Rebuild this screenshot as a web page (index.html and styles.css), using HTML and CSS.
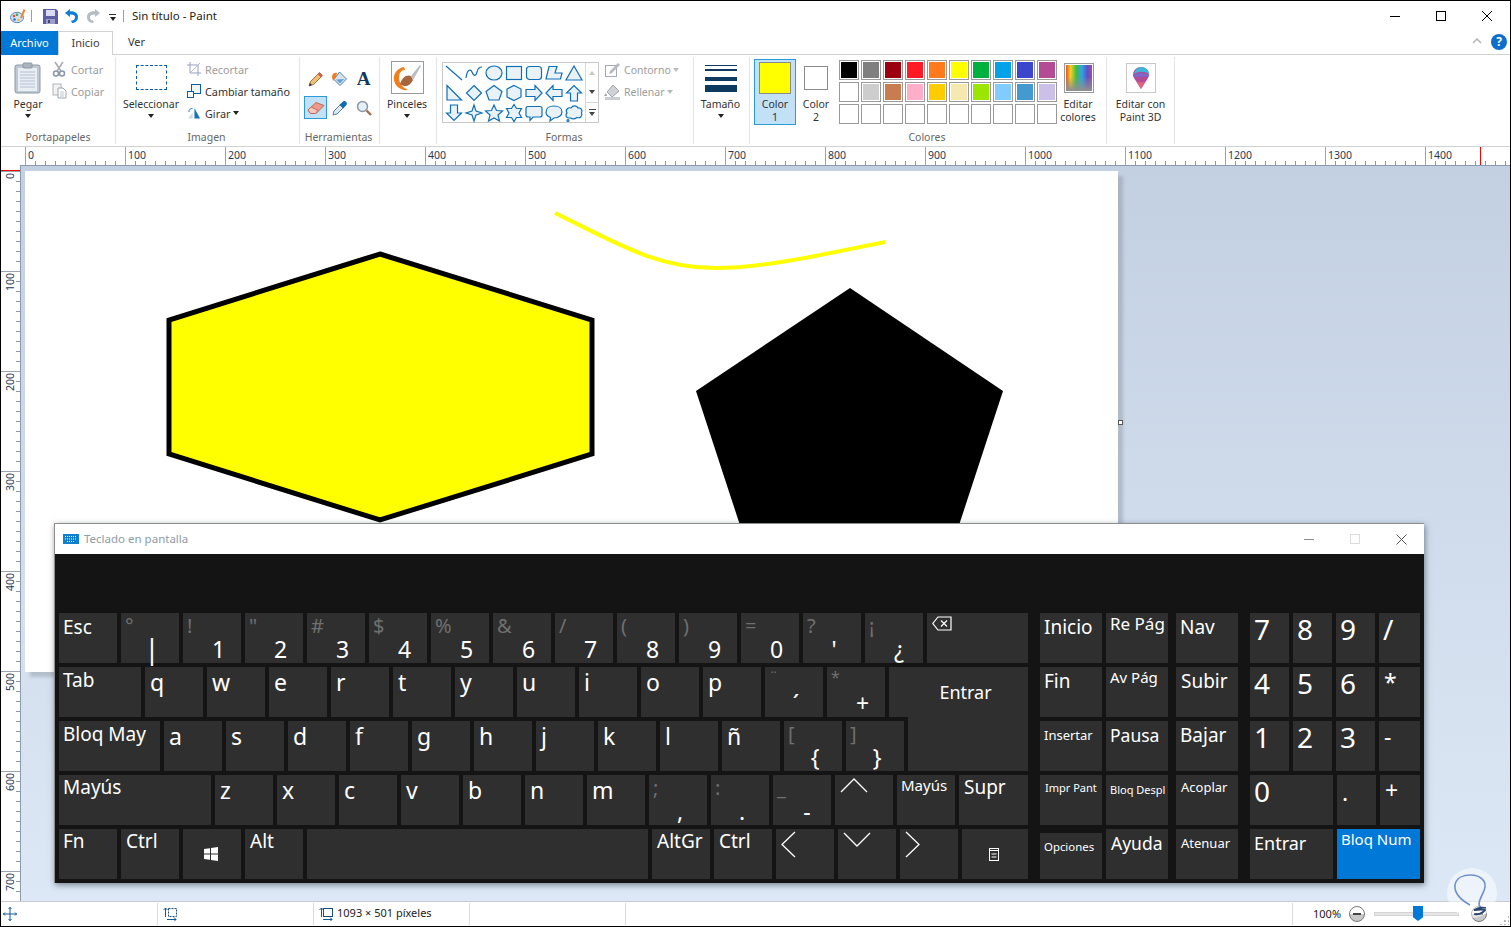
FILE: index.html
```html
<!DOCTYPE html>
<html lang="es">
<head>
<meta charset="utf-8">
<title>Sin título - Paint</title>
<link rel="stylesheet" href="styles.css">
</head>
<body>
<div class="app">
  <header class="titlebar">
    <svg class="ico-app" width="16" height="16" viewBox="0 0 16 16"><ellipse cx="7" cy="9.5" rx="6.5" ry="5.2" fill="#cfe3f4" stroke="#5b87b5"/><circle cx="4" cy="8" r="1.3" fill="#e2503d"/><circle cx="7" cy="6.7" r="1.3" fill="#3aa655"/><circle cx="4.5" cy="11.5" r="1.3" fill="#2f6fc0"/><circle cx="8.5" cy="12" r="1.2" fill="#e8b52e"/><path d="M11 10L14.5 1.5" stroke="#e98a2c" stroke-width="2"/></svg>
    <i class="tb-sep"></i>
    <svg class="ico-save" width="15" height="15" viewBox="0 0 15 15"><path d="M0 0H13L15 2V15H0Z" fill="#5d5ea6"/><rect x="3" y="1" width="9" height="6" fill="#d9dcf0"/><rect x="3" y="10" width="9" height="5" fill="#9ea0c8"/><rect x="5" y="11" width="2" height="3" fill="#44457f"/></svg>
    <svg class="ico-undo" width="15" height="16" viewBox="0 0 15 16"><path d="M1 5L6 1V3.4C11 3 14 5.4 14 9C14 12.5 11.6 15 8 15L7 12.7C9.8 12.7 11 11.2 11 9C11 7.2 9.200 6.300 6 6.500V9Z" fill="#0e7fd6"/></svg>
    <svg class="ico-redo" width="15" height="16" viewBox="0 0 15 16"><path d="M14 5L9 1V3.400C4 3 1 5.400 1 9C1 12.500 3.400 15 7 15L8 12.700C5.200 12.700 4 11.200 4 9C4 7.200 5.800 6.300 9 6.500V9Z" fill="#b4bcc4"/></svg>
    <span class="tb-drop"><i class="tb-drop-line"></i><i class="caret"></i></span>
    <i class="tb-sep tb-sep2"></i>
    <span class="tb-title">Sin título - Paint</span>
    <div class="winctl">
      <svg width="12" height="12" viewBox="0 0 12 12"><path d="M1 6.500H11" stroke="#000"/></svg>
      <svg width="12" height="12" viewBox="0 0 12 12"><rect x="1.500" y="1.500" width="9" height="9" fill="none" stroke="#000"/></svg>
      <svg width="12" height="12" viewBox="0 0 12 12"><path d="M1 1L11 11M11 1L1 11" stroke="#000"/></svg>
    </div>
  </header>

  <nav class="tabs">
    <span class="tab tab-file">Archivo</span>
    <span class="tab tab-on">Inicio</span>
    <span class="tab tab-ver">Ver</span>
    <svg class="tabs-up" width="10" height="6" viewBox="0 0 10 6"><path d="M1 5L5 1L9 5" fill="none" stroke="#b5b5b5" stroke-width="1.500"/></svg>
    <span class="help">?</span>
  </nav>

  <section class="ribbon">
    <div class="group g-clip">
      <div class="group-body">
        <div class="big b-paste">
          <div class="big-ico"><svg width="28" height="32" viewBox="0 0 28 32"><rect x="1" y="3" width="25" height="28" rx="2" fill="#bfc8d3" stroke="#8e99a6"/><rect x="4" y="6" width="19" height="23" fill="#e9eef5"/><path d="M6 10H21M6 13H21M6 16H21M6 19H21M6 22H21M6 25H21" stroke="#b4c1d2"/><rect x="9" y="1" width="9" height="5" rx="1" fill="#aab3be" stroke="#8e99a6"/></svg></div>
          <span class="big-label">Pegar</span><i class="caret"></i>
        </div>
        <div class="smalls s-clip">
          <div class="small off"><svg width="15" height="16" viewBox="0 0 15 16"><path d="M3 1L9 10M11 1L5 10" stroke="#a5a9b0" stroke-width="1.500"/><circle cx="4" cy="12.500" r="2.500" fill="none" stroke="#8b94a8" stroke-width="1.500"/><circle cx="10" cy="12.500" r="2.500" fill="none" stroke="#8b94a8" stroke-width="1.500"/></svg>Cortar</div>
          <div class="small off"><svg width="15" height="16" viewBox="0 0 15 16"><rect x="1" y="1" width="8" height="11" fill="#f3f3f3" stroke="#aeb4bb"/><path d="M6 5H11L14 8V15H6Z" fill="#fff" stroke="#9ea5ad"/><path d="M8 9H12M8 11H12M8 13H12" stroke="#c0c5cb"/></svg>Copiar</div>
        </div>
      </div>
      <div class="group-label">Portapapeles</div>
    </div>

    <div class="group g-image">
      <div class="group-body">
        <div class="big b-select">
          <div class="big-ico"><i class="dashed"></i></div>
          <span class="big-label">Seleccionar</span><i class="caret"></i>
        </div>
        <div class="smalls s-image">
          <div class="small off"><svg width="14" height="14" viewBox="0 0 14 14"><path d="M3 0V11H14M0 3H11V14" fill="none" stroke="#9a9fc0"/><path d="M3 11L13 1" stroke="#b5b8d0"/></svg>Recortar</div>
          <div class="small"><svg width="14" height="14" viewBox="0 0 14 14"><rect x="4.500" y="0.500" width="9" height="9" fill="#eef5fb" stroke="#0e5f9e"/><rect x="0.500" y="7.500" width="6" height="6" fill="#fff" stroke="#0e5f9e"/></svg>Cambiar tamaño</div>
          <div class="small"><svg width="14" height="14" viewBox="0 0 15 14"><path d="M8 13V2L14 13Z" fill="#1273b8"/><path d="M6 13L1 13L6 7Z" fill="#cfd8e0"/><path d="M2 6C2 3 4 2 6 2" fill="none" stroke="#1273b8"/></svg>Girar<i class="caret caret-in"></i></div>
        </div>
      </div>
      <div class="group-label">Imagen</div>
    </div>

    <div class="group g-tools">
      <div class="group-body">
        <div class="tools">
          <span class="tool"><svg width="16" height="16" viewBox="0 0 16 16"><path d="M1 15L2.500 10.500L11.500 1.500L14.500 4.500L5.500 13.500Z" fill="#f0c070" stroke="#a8703a"/><path d="M1 15L2 12L4 14Z" fill="#333"/><path d="M10.500 2.500L13.500 5.500" stroke="#d9534f" stroke-width="2"/></svg></span>
          <span class="tool"><svg width="17" height="17" viewBox="0 0 17 17"><path d="M8.500 2L15.500 9L9 15.500L3 9.500Z" fill="#d4e4f4" stroke="#4f81b0"/><path d="M5 9.500L9 13.500L13 9Z" fill="#68a0d4"/><path d="M1 7C1 4 3 2 6 3L5 7L2 11Z" fill="#f27d1f"/></svg></span>
          <span class="tool tool-a">A</span>
          <span class="tool tool-on"><svg width="18" height="14" viewBox="0 0 18 14"><path d="M1 9L9 1.500L17 4.500L9 12.500L3.500 12.500Z" fill="#f0988a" stroke="#b96d5f"/><path d="M1 9L4 5.800L11 9.500L8.500 12.500H3.500Z" fill="#f6c6b8" stroke="#b96d5f"/></svg></span>
          <span class="tool"><svg width="16" height="16" viewBox="0 0 16 16"><path d="M1 15L2 11L8 5L11 8L5 14Z" fill="#dbe9f4" stroke="#5d7f9b"/><path d="M7.500 4.500L11.500 8.500L12.500 7L14.500 5C16 3 13 0 11 1.500L9 3.500Z" fill="#0e6db3"/></svg></span>
          <span class="tool"><svg width="16" height="16" viewBox="0 0 16 16"><circle cx="6.500" cy="6.500" r="5" fill="#e3eff9" stroke="#8b97a5" stroke-width="1.500"/><path d="M10.500 10.500L15 15" stroke="#a07050" stroke-width="2.400"/></svg></span>
        </div>
      </div>
      <div class="group-label">Herramientas</div>
    </div>

    <div class="group g-brush">
      <div class="group-body">
        <div class="big b-full b-left">
          <div class="big-ico"><span class="brush"><svg width="30" height="30" viewBox="0 0 30 30"><path d="M12 4C6 5 1 10 2 17C3 24 10 28 16 27C11 25 7 20 7 15C7 10 9 7 13 7Z" fill="#f07f1c"/><path d="M8 21C10 14 15 11 19 13L21 17C18 23 13 25 8 21Z" fill="#a8643c"/><path d="M19 13L28 2L29 3L21 17Z" fill="#b9bec4"/></svg></span></div>
          <span class="big-label">Pinceles</span><i class="caret"></i>
        </div>
      </div>
      <div class="group-label">&nbsp;</div>
    </div>

    <div class="group g-shapes">
      <div class="group-body">
        <div class="gallery">
          <div class="gal-grid">
            <svg class="sh" viewBox="0 0 20 20"><path d="M2 3L18 17"/></svg>
            <svg class="sh" viewBox="0 0 20 20"><path class="nf" d="M2 15C3 7 6 5 8 9C10 14 12 13 13 9C14 5 16 4 18 4"/></svg>
            <svg class="sh" viewBox="0 0 20 20"><ellipse cx="10" cy="10" rx="8" ry="7"/></svg>
            <svg class="sh" viewBox="0 0 20 20"><rect x="2.500" y="3.500" width="15" height="13"/></svg>
            <svg class="sh" viewBox="0 0 20 20"><rect x="2.500" y="3.500" width="15" height="13" rx="3"/></svg>
            <svg class="sh" viewBox="0 0 20 20"><path d="M2 16L5 3.500H13L11 10H18L16.500 16Z"/></svg>
            <svg class="sh" viewBox="0 0 20 20"><path d="M10 3L18 17H2Z"/></svg>
            <svg class="sh" viewBox="0 0 20 20"><path d="M3 2.500L17.500 17H3Z"/></svg>
            <svg class="sh" viewBox="0 0 20 20"><path d="M10 2.500L17.500 10L10 17.500L2.500 10Z"/></svg>
            <svg class="sh" viewBox="0 0 20 20"><path d="M10 2.500L18 8.500L15 17H5L2 8.500Z"/></svg>
            <svg class="sh" viewBox="0 0 20 20"><path d="M10 2.500L17 6V14L10 17.500L3 14V6Z"/></svg>
            <svg class="sh" viewBox="0 0 20 20"><path d="M2 6.500H11V2.500L18 10L11 17.500V13.500H2Z"/></svg>
            <svg class="sh" viewBox="0 0 20 20"><path d="M18 6.500H9V2.500L2 10L9 17.500V13.500H18Z"/></svg>
            <svg class="sh" viewBox="0 0 20 20"><path d="M6.500 18V10H2.500L10 2.500L17.500 10H13.500V18Z"/></svg>
            <svg class="sh" viewBox="0 0 20 20"><path d="M6.500 2V10H2.500L10 17.500L17.500 10H13.500V2Z"/></svg>
            <svg class="sh" viewBox="0 0 20 20"><path d="M10 2L12 8L18 10L12 12L10 18L8 12L2 10L8 8Z"/></svg>
            <svg class="sh" viewBox="0 0 20 20"><path d="M10 2L12.500 7.500L18.500 8L14 12L15.500 18L10 15L4.500 18L6 12L1.500 8L7.500 7.500Z"/></svg>
            <svg class="sh" viewBox="0 0 20 20"><path d="M10 1.500L12.500 5.500H17.500L15 10L17.500 14.500H12.500L10 18.500L7.500 14.500H2.500L5 10L2.500 5.500H7.500Z"/></svg>
            <svg class="sh" viewBox="0 0 20 20"><path d="M4 3.500H16C17.500 3.500 18 4.500 18 5.500V12C18 13 17.500 14 16 14H9L6 17.500V14H4C2.500 14 2 13 2 12V5.500C2 4.500 2.500 3.500 4 3.500Z"/></svg>
            <svg class="sh" viewBox="0 0 20 20"><path d="M10 3C15 3 18 5.500 18 9C18 12.500 14.500 15 10 15L6 18L6.500 14.500C3.500 13.500 2 11.500 2 9C2 5.500 5 3 10 3Z"/></svg>
            <svg class="sh" viewBox="0 0 20 20"><path d="M5 15C2 15 1 12 3 10C1 7 4 4 7 5C9 2 13 2.500 14 5C17 4.500 19 7.500 17.500 10C19 13 16 15.500 13 14.500C11 16 8 16 6.500 15Z"/><circle cx="4" cy="17.500" r="1"/></svg>
          </div>
          <div class="gal-scroll">
            <span class="gs"><i class="tri-up"></i></span>
            <span class="gs"><i class="tri-dn"></i></span>
            <span class="gs gs-more"><i class="gs-line"></i><i class="tri-dn"></i></span>
          </div>
        </div>
        <div class="smalls s-shape">
          <div class="small off"><svg width="17" height="16" viewBox="0 0 17 16"><rect x="1.500" y="3.500" width="11" height="11" fill="#fff" stroke="#a3a7c8"/><path d="M5 12L6 9L14 1L16 3L8 11Z" fill="#b8bac0"/></svg>Contorno<i class="caret caret-in caret-off"></i></div>
          <div class="small off"><svg width="17" height="16" viewBox="0 0 17 16"><path d="M9 1L15 7L8 13L3 8Z" fill="#cfd3d8" stroke="#a0a6ad"/><path d="M2 9L0 12L3 12Z" fill="#9aa0a8"/><rect x="1" y="13" width="15" height="3" fill="#c9cdd3"/></svg>Rellenar<i class="caret caret-in caret-off"></i></div>
        </div>
      </div>
      <div class="group-label">Formas</div>
    </div>

    <div class="group g-size">
      <div class="group-body">
        <div class="big b-full b-left">
          <div class="big-ico"><span class="lines"><i class="l1"></i><i class="l2"></i><i class="l3"></i><i class="l4"></i></span></div>
          <span class="big-label">Tamaño</span><i class="caret"></i>
        </div>
      </div>
      <div class="group-label">&nbsp;</div>
    </div>

    <div class="group g-colors">
      <div class="group-body">
        <div class="color-btn color-on">
          <div class="c1-ico"><i class="c-swatch c-yellow"></i></div>
          <span class="big-label">Color<br>1</span>
        </div>
        <div class="color-btn">
          <div class="big-ico"><i class="c-swatch c-white"></i></div>
          <span class="big-label">Color<br>2</span>
        </div>
        <div class="swatches">
          <i class="sw"><b style="background:#000"></b></i><i class="sw"><b style="background:#7f7f7f"></b></i><i class="sw"><b style="background:#9c0010"></b></i><i class="sw"><b style="background:#ff1a25"></b></i><i class="sw"><b style="background:#ff7a1c"></b></i><i class="sw"><b style="background:#ffff00"></b></i><i class="sw"><b style="background:#00b140"></b></i><i class="sw"><b style="background:#00a2e8"></b></i><i class="sw"><b style="background:#3c46cc"></b></i><i class="sw"><b style="background:#b44b95"></b></i>
          <i class="sw"><b style="background:#fff"></b></i><i class="sw"><b style="background:#cdcdcd"></b></i><i class="sw"><b style="background:#c87c50"></b></i><i class="sw"><b style="background:#ffaec9"></b></i><i class="sw"><b style="background:#ffcc00"></b></i><i class="sw"><b style="background:#f5e8b0"></b></i><i class="sw"><b style="background:#9be600"></b></i><i class="sw"><b style="background:#80ccff"></b></i><i class="sw"><b style="background:#4499d0"></b></i><i class="sw"><b style="background:#ccc0e8"></b></i>
          <i class="sw"></i><i class="sw"></i><i class="sw"></i><i class="sw"></i><i class="sw"></i><i class="sw"></i><i class="sw"></i><i class="sw"></i><i class="sw"></i><i class="sw"></i>
        </div>
        <div class="big b-edit">
          <div class="big-ico"><i class="rainbow"></i></div>
          <span class="big-label">Editar<br>colores</span>
        </div>
      </div>
      <div class="group-label">Colores</div>
    </div>

    <div class="group g-3d">
      <div class="group-body">
        <div class="big b-full">
          <div class="big-ico"><span class="p3d"><svg width="18" height="24" viewBox="0 0 18 24"><path d="M9 23L2 12C-1 6 4 1 9 1C14 1 19 6 16 12Z" fill="#b44b95"/><path d="M2 8C3 3 7 1 9 1C14 1 17 4 17 8C12 5 7 5 2 8Z" fill="#3fb6d8"/><path d="M1 10C6 6 12 6 17 10C16 12 12 10 9 11C6 10 3 12 1 10Z" fill="#7b68c8"/><path d="M9 23L5 15C8 17 11 17 13 15Z" fill="#e9647a"/></svg></span></div>
          <span class="big-label">Editar con<br>Paint 3D</span>
        </div>
      </div>
      <div class="group-label">&nbsp;</div>
    </div>
  </section>

  <div class="ruler-top">
    <div class="ruler-corner"></div>
    <div class="ruler-h">
      <span>0</span><span>100</span><span>200</span><span>300</span><span>400</span><span>500</span><span>600</span><span>700</span><span>800</span><span>900</span><span>1000</span><span>1100</span><span>1200</span><span>1300</span><span>1400</span>
      <i class="ruler-mark-h"></i>
    </div>
  </div>

  <main class="work">
    <div class="ruler-v">
      <i class="ruler-mark-v"></i>
      <span><em>0</em></span><span><em>100</em></span><span><em>200</em></span><span><em>300</em></span><span><em>400</em></span><span><em>500</em></span><span><em>600</em></span><span><em>700</em></span>
    </div>
    <div class="stage">
      <div class="canvas">
        <svg width="1093" height="501" viewBox="0 0 1093 501">
          <path d="M530 42C590 71 630 97 690 97C740 97 800 83 860 71" fill="none" stroke="#ffff00" stroke-width="4"/>
          <path d="M355 83L567 149V283L355 349L144 283V149Z" fill="#ffff00" stroke="#000" stroke-width="5"/>
          <path d="M825 117L978 220L919 400H730L671 220Z" fill="#000"/>
        </svg>
        <i class="handle"></i>
      </div>
    </div>
  </main>

  <footer class="status">
    <div class="st st1"><svg width="14" height="14" viewBox="0 0 14 14"><path d="M7 0V14M0 7H14M5.500 2L7 .5L8.500 2M5.500 12L7 13.500L8.500 12M2 5.500L.5 7L2 8.500M12 5.500L13.500 7L12 8.500" fill="none" stroke="#0f5a94"/></svg></div>
    <div class="st st2"><svg width="14" height="14" viewBox="0 0 14 14"><path d="M2.500 1V10M.5 3L2.500 1L4.500 3M4 12.500H13M11 10.500L13 12.500L11 14.500" fill="none" stroke="#0f5a94"/><rect x="5.500" y="1.500" width="8" height="8" fill="none" stroke="#1b4f7a" stroke-dasharray="2 1"/></svg></div>
    <div class="st st3"><svg width="14" height="14" viewBox="0 0 14 14"><path d="M2.500 1V10M.5 3L2.500 1L4.500 3M4 12.500H13M11 10.500L13 12.500L11 14.500" fill="none" stroke="#0f5a94"/><rect x="4.500" y="1.500" width="9" height="8" fill="none" stroke="#1b4f7a"/></svg><span class="st-text">1093 × 501 píxeles</span></div>
    <div class="st st4"></div>
    <div class="st st5"></div>
    <div class="st-zoom">
      <span class="zoom-pct">100%</span>
      <i class="zoom-btn"><b></b></i>
      <span class="slider"><i class="thumb"></i></span>
      <i class="zoom-btn zoom-plus"><b></b></i>
    </div>
    <i class="grip"></i>
  </footer>

  <section class="osk">
    <div class="osk-title">
      <svg width="16" height="10" viewBox="0 0 16 10"><rect width="16" height="10" fill="#0f7fd0"/><path d="M2 2.500H14M2 5H14M4 7.500H12" stroke="#fff" stroke-dasharray="1 1"/></svg>
      <span class="osk-name">Teclado en pantalla</span>
      <div class="osk-ctl">
        <svg width="11" height="11" viewBox="0 0 11 11"><path d="M0 5.500H10" stroke="#8a8a8a"/></svg>
        <svg width="11" height="11" viewBox="0 0 11 11"><rect x=".5" y=".5" width="9" height="9" fill="none" stroke="#dcdcdc"/></svg>
        <svg width="11" height="11" viewBox="0 0 11 11"><path d="M.5 .5L10.500 10.500M10.500 .5L.5 10.500" stroke="#555"/></svg>
      </div>
    </div>
    <div class="osk-body">
      <div class="kb-main">
        <div class="kb-row">
          <div class="k">Esc</div>
          <div class="k kd"><span class="sym">°</span><span class="ch cp ch-bar">|</span></div>
          <div class="k kd"><span class="sym">!</span><span class="ch">1</span></div>
          <div class="k kd"><span class="sym">"</span><span class="ch">2</span></div>
          <div class="k kd"><span class="sym">#</span><span class="ch">3</span></div>
          <div class="k kd"><span class="sym">$</span><span class="ch">4</span></div>
          <div class="k kd"><span class="sym">%</span><span class="ch">5</span></div>
          <div class="k kd"><span class="sym">&amp;</span><span class="ch">6</span></div>
          <div class="k kd"><span class="sym">/</span><span class="ch">7</span></div>
          <div class="k kd"><span class="sym">(</span><span class="ch">8</span></div>
          <div class="k kd"><span class="sym">)</span><span class="ch">9</span></div>
          <div class="k kd"><span class="sym">=</span><span class="ch">0</span></div>
          <div class="k kd"><span class="sym">?</span><span class="ch cp">'</span></div>
          <div class="k kd"><span class="sym">¡</span><span class="ch cp2">¿</span></div>
          <div class="k w101"><svg class="bksp" width="20" height="15" viewBox="0 0 20 15"><path d="M6 1H19V14H6L.8 7.500Z" fill="none" stroke="#fff" stroke-width="1.200"/><path d="M9 4.500L15 10.500M15 4.500L9 10.500" stroke="#fff" stroke-width="1.200"/></svg></div>
        </div>
        <div class="kb-row">
          <div class="k w82 up1">Tab</div>
          <div class="k kl">q</div><div class="k kl">w</div><div class="k kl">e</div><div class="k kl">r</div><div class="k kl">t</div><div class="k kl">y</div><div class="k kl">u</div><div class="k kl">i</div><div class="k kl">o</div><div class="k kl">p</div>
          <div class="k kd"><span class="sym sym-sm">¨</span><span class="ch cp">´</span></div>
          <div class="k kd"><span class="sym sym-sm">*</span><span class="ch">+</span></div>
          <div class="k k-enter">Entrar</div>
        </div>
        <div class="kb-row">
          <div class="k w101 up1">Bloq May</div>
          <div class="k kl">a</div><div class="k kl">s</div><div class="k kl">d</div><div class="k kl">f</div><div class="k kl">g</div><div class="k kl">h</div><div class="k kl">j</div><div class="k kl">k</div><div class="k kl">l</div><div class="k kl">ñ</div>
          <div class="k kd"><span class="sym">[</span><span class="ch cp">{</span></div>
          <div class="k kd"><span class="sym">]</span><span class="ch cp">}</span></div>
          <div class="k k-enter2"></div>
        </div>
        <div class="kb-row">
          <div class="k w152 up2">Mayús</div>
          <div class="k kl">z</div><div class="k kl">x</div><div class="k kl">c</div><div class="k kl">v</div><div class="k kl">b</div><div class="k kl">n</div><div class="k kl">m</div>
          <div class="k kd"><span class="sym">;</span><span class="ch cp">,</span></div>
          <div class="k kd"><span class="sym">:</span><span class="ch cp">.</span></div>
          <div class="k kd"><span class="sym">_</span><span class="ch cp2">-</span></div>
          <div class="k"><svg class="arr arr-up" width="28" height="15" viewBox="0 0 28 15"><path d="M1 14L14 1L27 14" fill="none" stroke="#fff" stroke-width="1.300"/></svg></div>
          <div class="k t16">Mayús</div>
          <div class="k w69 up2 p5">Supr</div>
        </div>
        <div class="kb-row">
          <div class="k up2">Fn</div>
          <div class="k up2 p5">Ctrl</div>
          <div class="k kc"><svg width="14" height="14" viewBox="0 0 14 14"><path d="M0 2L6 1.200V6.500H0ZM7 1L14 0V6.500H7ZM0 7.500H6V12.800L0 12ZM7 7.500H14V14L7 13Z" fill="#fff"/></svg></div>
          <div class="k up2 p5">Alt</div>
          <div class="k w341"></div>
          <div class="k up2 p5">AltGr</div>
          <div class="k up2 p5">Ctrl</div>
          <div class="k"><svg class="arr arr-l" width="15" height="27" viewBox="0 0 15 27"><path d="M14 1L1 13.500L14 26" fill="none" stroke="#fff" stroke-width="1.300"/></svg></div>
          <div class="k"><svg class="arr arr-d" width="28" height="15" viewBox="0 0 28 15"><path d="M1 1L14 14L27 1" fill="none" stroke="#fff" stroke-width="1.300"/></svg></div>
          <div class="k"><svg class="arr arr-r" width="15" height="27" viewBox="0 0 15 27"><path d="M1 1L14 13.500L1 26" fill="none" stroke="#fff" stroke-width="1.300"/></svg></div>
          <div class="k w66 kc"><svg class="menu-ic" width="10" height="13" viewBox="0 0 10 13"><rect x=".5" y=".5" width="9" height="12" fill="none" stroke="#fff"/><path d="M0 2.500H10M2.500 6H7.500M2.500 9H7.500" stroke="#fff"/></svg></div>
        </div>
      </div>

      <div class="kb-nav">
        <div class="kb-row"><div class="k w62">Inicio</div><div class="k w62 t18">Re Pág</div><div class="k w62 gapl">Nav</div></div>
        <div class="kb-row"><div class="k w62">Fin</div><div class="k w62 t15a">Av Pág</div><div class="k w62 gapl p5">Subir</div></div>
        <div class="kb-row"><div class="k w62 t13">Insertar</div><div class="k w62 t175">Pausa</div><div class="k w62 gapl">Bajar</div></div>
        <div class="kb-row"><div class="k w62 t12">Impr Pant</div><div class="k w62 t11">Bloq Despl</div><div class="k w62 gapl t145">Acoplar</div></div>
        <div class="kb-row"><div class="k w62 t125 k-short">Opciones</div><div class="k w62 t175 p5">Ayuda</div><div class="k w62 gapl t145 k-mid">Atenuar</div></div>
      </div>

      <div class="kb-num">
        <div class="kb-row"><div class="k w39 kn">7</div><div class="k w39 kn">8</div><div class="k w39 kn">9</div><div class="k w41 kn">/</div></div>
        <div class="kb-row"><div class="k w39 kn">4</div><div class="k w39 kn">5</div><div class="k w39 kn">6</div><div class="k w41 kl">*</div></div>
        <div class="kb-row"><div class="k w39 kn">1</div><div class="k w39 kn">2</div><div class="k w39 kn">3</div><div class="k w41 kl">-</div></div>
        <div class="kb-row"><div class="k w83 kn">0</div><div class="k w39 kl kdot">.</div><div class="k w40 kl">+</div></div>
        <div class="kb-row"><div class="k w83 t18e">Entrar</div><div class="k w83 t16 k-on">Bloq Num</div></div>
      </div>
    </div>
  </section>

  <div class="watermark">
    <svg width="50" height="50" viewBox="0 0 50 50"><path d="M23 37C14 32 7 26 8 17C9 10 16 7 24 7C32 7 39 12 38 19C37 26 32 29 32 37L35 41" fill="none" stroke="#6f8fd0" stroke-width="1.600"/><path d="M27 46C31 47 36 45 38 42C35 41 30 42 27 42C31 40 35 39 39 40" fill="none" stroke="#27456f" stroke-width="1.800"/></svg>
  </div>
</div>
</body>
</html>
```
FILE: styles.css
```css
* { box-sizing: border-box; }
html, body { margin: 0; padding: 0; }
i, em { font-style: normal; }
svg { display: block; flex: none; }
body {
  font-family: "Noto Sans", "Open Sans", sans-serif;
  font-size: 11px;
  color: #222;
  background: #fff;
}
.app {
  position: relative;
  width: 1511px;
  height: 927px;
  border: 1px solid #000;
  display: flex;
  flex-direction: column;
  overflow: hidden;
  background: #fff;
}

/* title bar */
.titlebar { height: 30px; flex: none; display: flex; align-items: center; padding-left: 9px; }
.ico-save { margin-left: 11px; }
.ico-undo { margin-left: 6px; }
.ico-redo { margin-left: 7px; }
.tb-sep { width: 1px; height: 12px; background: #a0a0a0; margin-left: 5px; }
.tb-sep2 { margin-left: 7px; }
.tb-drop { display: flex; flex-direction: column; gap: 2px; align-items: center; margin-left: 8px; margin-top: 3px; }
.tb-drop-line { width: 7px; height: 1px; background: #333; }
.tb-title { margin: -2px 0 0 8px; font-size: 11.500px; color: #222; }
.winctl { margin-left: auto; display: flex; gap: 34px; padding-right: 17px; }

/* tabs */
.tabs { height: 24px; flex: none; display: flex; align-items: stretch; border-bottom: 1px solid #d2d2d2; position: relative; }
.tab { display: flex; align-items: center; justify-content: center; color: #333; padding-bottom: 2px; }
.tab-file { width: 57px; background: #0078d7; color: #fff; margin-bottom: -1px; }
.tab-on { width: 55px; border: 1px solid #d2d2d2; border-bottom: 0; margin-bottom: -1px; background: #fff; color: #3c3c3c; position: relative; }
.tab-ver { width: 47px; }
.tabs-up { margin: 7px 7px auto auto; }
.help { width: 16px; height: 16px; margin: 3px 3px auto 2px; border-radius: 50%; background: #0d6ecb; color: #fff; font-weight: 700; font-size: 12px; line-height: 16px; text-align: center; }

/* ribbon */
.ribbon { height: 92px; flex: none; display: flex; border-bottom: 1px solid #d2d2d2; }
.group { margin: 2px 0; display: flex; flex-direction: column; border-right: 1px solid #e4e4e4; flex: none; }
.g-clip { width: 115px; }
.g-image { width: 184px; }
.g-tools { width: 80px; }
.g-brush { width: 57px; }
.g-shapes { width: 257px; }
.g-size { width: 56px; }
.g-colors { width: 357px; }
.g-3d { width: 68px; }
.group-body { flex: 1; display: flex; min-height: 0; }
.group-label { height: 13px; line-height: 13px; text-align: center; color: #666; font-size: 10.500px; }
.g-image .group-label, .g-tools .group-label, .g-shapes .group-label, .g-colors .group-label { padding-right: 2px; }

.big { display: flex; flex-direction: column; align-items: center; }
.big-ico { height: 41px; display: flex; align-items: center; justify-content: center; width: 100%; }
.big-label { line-height: 13px; text-align: center; white-space: nowrap; font-size: 10.500px; color: #333; }
.big .caret { margin-top: 3px; }
.b-paste { width: 42px; margin-left: 6px; }
.b-select { width: 62px; margin-left: 4px; }
.b-full { width: 100%; }
.b-left { padding-right: 2px; }
.b-edit { width: 40px; margin-left: 1px; }

.caret { display: block; width: 0; height: 0; border: 3.500px solid transparent; border-top: 4px solid #222; border-bottom: 0; }
.caret-in { margin-left: -1px; }
.caret-off { border-top-color: #bbb; }

.smalls { display: flex; flex-direction: column; padding-top: 1px; }
.small { height: 22px; display: flex; align-items: center; gap: 4px; white-space: nowrap; font-size: 10.800px; color: #333; }
.small.off { color: #9c9c9c; }
.s-clip { margin-left: 3px; }
.s-image { margin-left: 5px; }
.s-shape { margin-left: 5px; padding-top: 2px; }
.s-shape .small { gap: 3px; font-size: 10.500px; }

.dashed { display: block; width: 31px; height: 25px; border: 1px dashed #0f5a9c; }

.tools { display: grid; grid-template-columns: repeat(3, 23px); column-gap: 1px; grid-auto-rows: 23px; row-gap: 6px; padding: 10px 0 0 4px; }
.tool { display: flex; align-items: center; justify-content: center; }
.tool-a { font-family: "Liberation Serif", serif; font-weight: 700; font-size: 19px; color: #0e3a62; }
.tool-on { background: #c2e0f6; border: 1px solid #2a9ad8; }

.brush { width: 33px; height: 33px; border: 1px solid #9a9a9a; display: flex; align-items: center; justify-content: center; background: #fff; }

.gallery { margin: 5px 0 0 5px; width: 157px; height: 61px; border: 1px solid #c8c8c8; display: flex; }
.gal-grid { display: grid; grid-template-columns: repeat(7, 20px); grid-auto-rows: 20px; width: 142px; padding-left: 1px; }
.sh { width: 20px; height: 20px; fill: #eaf2f9; stroke: #0e6fb5; stroke-width: 1.200; }
.sh .nf { fill: none; }
.gal-scroll { flex: 1; border-left: 1px solid #d8d8d8; display: flex; flex-direction: column; }
.gs { height: 20px; display: flex; flex-direction: column; gap: 2px; align-items: center; justify-content: center; }
.gs-more { border-top: 1px solid #d8d8d8; }
.gs-line { width: 7px; height: 1px; background: #444; }
.tri-up { display: block; width: 0; height: 0; border: 3.500px solid transparent; border-bottom: 4px solid #c8c8c8; border-top: 0; }
.tri-dn { display: block; width: 0; height: 0; border: 3.500px solid transparent; border-top: 4px solid #444; border-bottom: 0; }

.lines { display: flex; flex-direction: column; width: 32px; }
.lines i { display: block; background: #0f3a5f; }
.l1 { height: 1px; margin-top: 1px; }
.l2 { height: 2px; margin-top: 3px; }
.l3 { height: 4px; margin-top: 6px; }
.l4 { height: 7px; margin-top: 4px; }

.color-btn { width: 42px; display: flex; flex-direction: column; align-items: center; }
.color-on { margin: 2px 1px 0 4px; height: 66px; border: 1px solid #2a9ad8; background: #c2e0f6; }
.c1-ico { height: 38px; width: 100%; display: flex; justify-content: center; padding-top: 2px; }
.c-swatch { display: block; }
.c-yellow { width: 32px; height: 32px; border: 1px solid #8a8a8a; background: #ffff00; }
.c-white { width: 24px; height: 24px; border: 1px solid #8a8a8a; background: #fff; }
.color-btn:not(.color-on) { width: 38px; }

.swatches { display: grid; grid-template-columns: repeat(10, 20px); grid-auto-rows: 20px; gap: 2px; padding-top: 3px; margin-left: 4px; }
.sw { display: block; border: 1px solid #9a9a9a; background: #fff; padding: 1px; }
.sw b { display: block; width: 100%; height: 100%; }

.rainbow { display: block; width: 30px; height: 30px; border: 1px solid #9a9a9a; box-shadow: inset 0 0 0 1px #fff; margin-left: 2px;
  background: linear-gradient(180deg, rgba(255,255,255,0) 45%, #8f8f8f 95%), linear-gradient(90deg, #e03a30, #f5d21f 20%, #3fba4a 40%, #2fa4e0 60%, #5c4ecb 80%, #b44b95); }
.p3d { width: 30px; height: 30px; border: 1px solid #c8c8c8; display: flex; align-items: center; justify-content: center; background: #fff; }

/* rulers */
.ruler-top { height: 19px; flex: none; display: flex; }
.ruler-corner { width: 19px; flex: none; }
.ruler-h { flex: 1; display: flex; position: relative; padding-left: 5px; border-bottom: 1px solid #8c9ab0;
  background: repeating-linear-gradient(90deg, #8c96a6 0 1px, transparent 1px 10px) 5px 100% / 100% 4px no-repeat; }
.ruler-h span { width: 100px; flex: none; border-left: 1px solid #9aa3b0; padding-left: 2px; font-size: 10.500px; line-height: 17px; color: #1f3a56; }
.ruler-mark-h { position: absolute; left: 1460px; top: 0; bottom: 0; width: 1px; background: #f00; }

.work { flex: 1; min-height: 0; display: flex; }
.ruler-v { width: 20px; flex: none; position: relative; padding-top: 5px; border-right: 1px solid #8c9ab0; overflow: hidden; display: flex; flex-direction: column;
  background: repeating-linear-gradient(180deg, #8c96a6 0 1px, transparent 1px 10px) 100% 5px / 4px 100% no-repeat; }
.ruler-v span { height: 100px; flex: none; border-top: 1px solid #9aa3b0; }
.ruler-v em { display: block; height: 99px; width: 100%; writing-mode: vertical-rl; transform: rotate(180deg); text-align: right; font-size: 10.500px; line-height: 19px; color: #1f3a56; padding-bottom: 1px; padding-left: 4px; }
.ruler-mark-v { position: absolute; left: 0; right: 0; top: 4px; height: 1px; background: #f00; }

.stage { flex: 1; padding: 5px 0 0 4px; background: linear-gradient(180deg, #c3d0e2, #dce8f5); }
.canvas { position: relative; width: 1093px; height: 501px; background: #fff; box-shadow: 5px 5px 3px rgba(120,130,140,.35); }
.canvas svg { display: block; }
.handle { position: absolute; left: 1093px; top: 249px; width: 5px; height: 5px; background: #fff; border: 1px solid #555; }

/* status */
.status { height: 25px; flex: none; display: flex; border-top: 1px solid #c8ccd0; position: relative; background: #fff; }
.st { display: flex; align-items: center; gap: 4px; padding-left: 4px; flex: none; position: relative; }
.st::after { content: ""; position: absolute; right: 0; top: 1px; bottom: 1px; width: 1px; background: #dcdcdc; }
.st1 { width: 157px; padding-left: 2px; }
.st2 { width: 156px; padding-left: 5px; }
.st3 { width: 156px; padding-left: 5px; font-size: 11px; color: #222; }
.st-text { margin-top: -3px; }
.st4 { width: 156px; }
.st5 { width: 667px; }
.st-zoom { flex: 1; display: flex; align-items: center; padding-left: 20px; }
.zoom-pct { width: 36px; font-size: 11px; margin-top: -2px; }
.zoom-btn { display: flex; align-items: center; justify-content: center; width: 16px; height: 16px; border-radius: 50%; border: 1px solid #777; background: linear-gradient(180deg, #fff 50%, #c8c8c8 50%); }
.zoom-btn b { width: 8px; height: 2px; background: #444; }
.slider { width: 85px; height: 4px; margin: 0 12px 0 9px; background: #e6e6e6; border: 1px solid #d4d4d4; position: relative; }
.thumb { position: absolute; left: 38px; top: -7px; width: 10px; height: 15px; background: #0078d7; clip-path: polygon(0 0, 100% 0, 100% 75%, 50% 100%, 0 75%); }
.grip { position: absolute; right: 1px; bottom: 1px; width: 10px; height: 10px; background: radial-gradient(circle, #b8b8b8 1px, transparent 1.200px) 0 0 / 4px 4px; clip-path: polygon(100% 0, 100% 100%, 0 100%); }

/* on-screen keyboard window */
.osk { position: absolute; left: 53px; top: 522px; width: 1370px; height: 360px; display: flex; flex-direction: column; background: #141414; border: 1px solid #8d8d8d; border-bottom: 0; border-right: 0; box-shadow: 1px 2px 6px rgba(40,50,60,.55); font-size: 20px; color: #fff; }
.osk-title { height: 30px; flex: none; display: flex; align-items: center; background: #fff; padding-left: 8px; font-size: 11.500px; }
.osk-name { margin: -2px 0 0 5px; color: #8d9ba6; }
.osk-ctl { margin-left: auto; display: flex; gap: 35px; padding-right: 17px; }
.osk-body { flex: 1; display: flex; padding: 59px 4px 0 4px; }
.kb-main { width: 969px; flex: none; display: flex; flex-direction: column; gap: 4px; }
.kb-nav { width: 198px; margin-left: 12px; flex: none; display: flex; flex-direction: column; gap: 4px; }
.kb-num { width: 170px; margin-left: 12px; flex: none; display: flex; flex-direction: column; gap: 4px; }
.kb-row { display: flex; gap: 4px; height: 50px; align-items: flex-start; }

.k { width: 58px; height: 50px; flex: none; background: #2f2f2f; padding: 0 4px; font-size: 19px; line-height: 28px; white-space: nowrap; }
.kl { font-size: 23px; line-height: 31px; padding-left: 5px; }
.kn { font-size: 28px; line-height: 32px; }
.kc { display: flex; align-items: center; justify-content: center; padding: 0 3px 0 0; }
.kd { display: flex; flex-direction: column; justify-content: space-between; }
.sym { font-size: 20px; line-height: 26px; color: #6f6f6f; height: 22px; }
.sym-sm { font-size: 16px; line-height: 20px; }
.ch { font-size: 23px; line-height: 28px; width: 24px; margin-left: 19.500px; text-align: center; }
.cp { margin-left: 15px; }
.cp2 { margin-left: 18px; }
.ch-bar { font-size: 27px; }
.up1 { line-height: 26px; }
.up2 { line-height: 25px; }
.p5 { padding-left: 5px; }
.w39 { width: 39px; }
.w40 { width: 40px; }
.w41 { width: 41px; }
.w62 { width: 62px; }
.w66 { width: 66px; }
.w69 { width: 69px; }
.w82 { width: 82px; }
.w83 { width: 83px; }
.w101 { width: 101px; }
.w152 { width: 152px; }
.w341 { width: 341px; }
.gapl { margin-left: 4px; }
.t11 { font-size: 11px; line-height: 30px; padding: 0 4px; }
.t12 { font-size: 11px; line-height: 26px; padding-left: 5px; }
.t125 { font-size: 11.400px; line-height: 27px; }
.t13 { font-size: 13px; line-height: 28px; }
.t145 { font-size: 13px; line-height: 24px; padding-left: 5px; }
.t15a { font-size: 15px; line-height: 21px; }
.t16 { font-size: 15px; line-height: 21px; }
.t175 { font-size: 17.500px; line-height: 28px; }
.t18 { font-size: 17px; line-height: 22px; }
.t18e { font-size: 18px; }
.k-short { height: 46px; margin-top: 4px; }
.k-mid { line-height: 29px; }
.k-enter { width: 139px; height: 50px; padding-left: 18px; text-align: center; line-height: 50px; font-size: 18px; }
.k-enter2 { width: 120px; height: 54px; margin-top: -4px; }
.k-on { background: #0078d7; }
.kdot { line-height: 34px; }
.bksp { margin: 3px 0 0 1px; }
.arr-up { margin: 3px 0 0 1px; }
.arr-d { margin: 3px 0 0 1px; }
.arr-l, .arr-r { margin: 2px 0 0 1px; }

.watermark { position: absolute; left: 1446px; top: 867px; width: 50px; height: 50px; border-radius: 50%; background: rgba(255,255,255,.5); }
```
